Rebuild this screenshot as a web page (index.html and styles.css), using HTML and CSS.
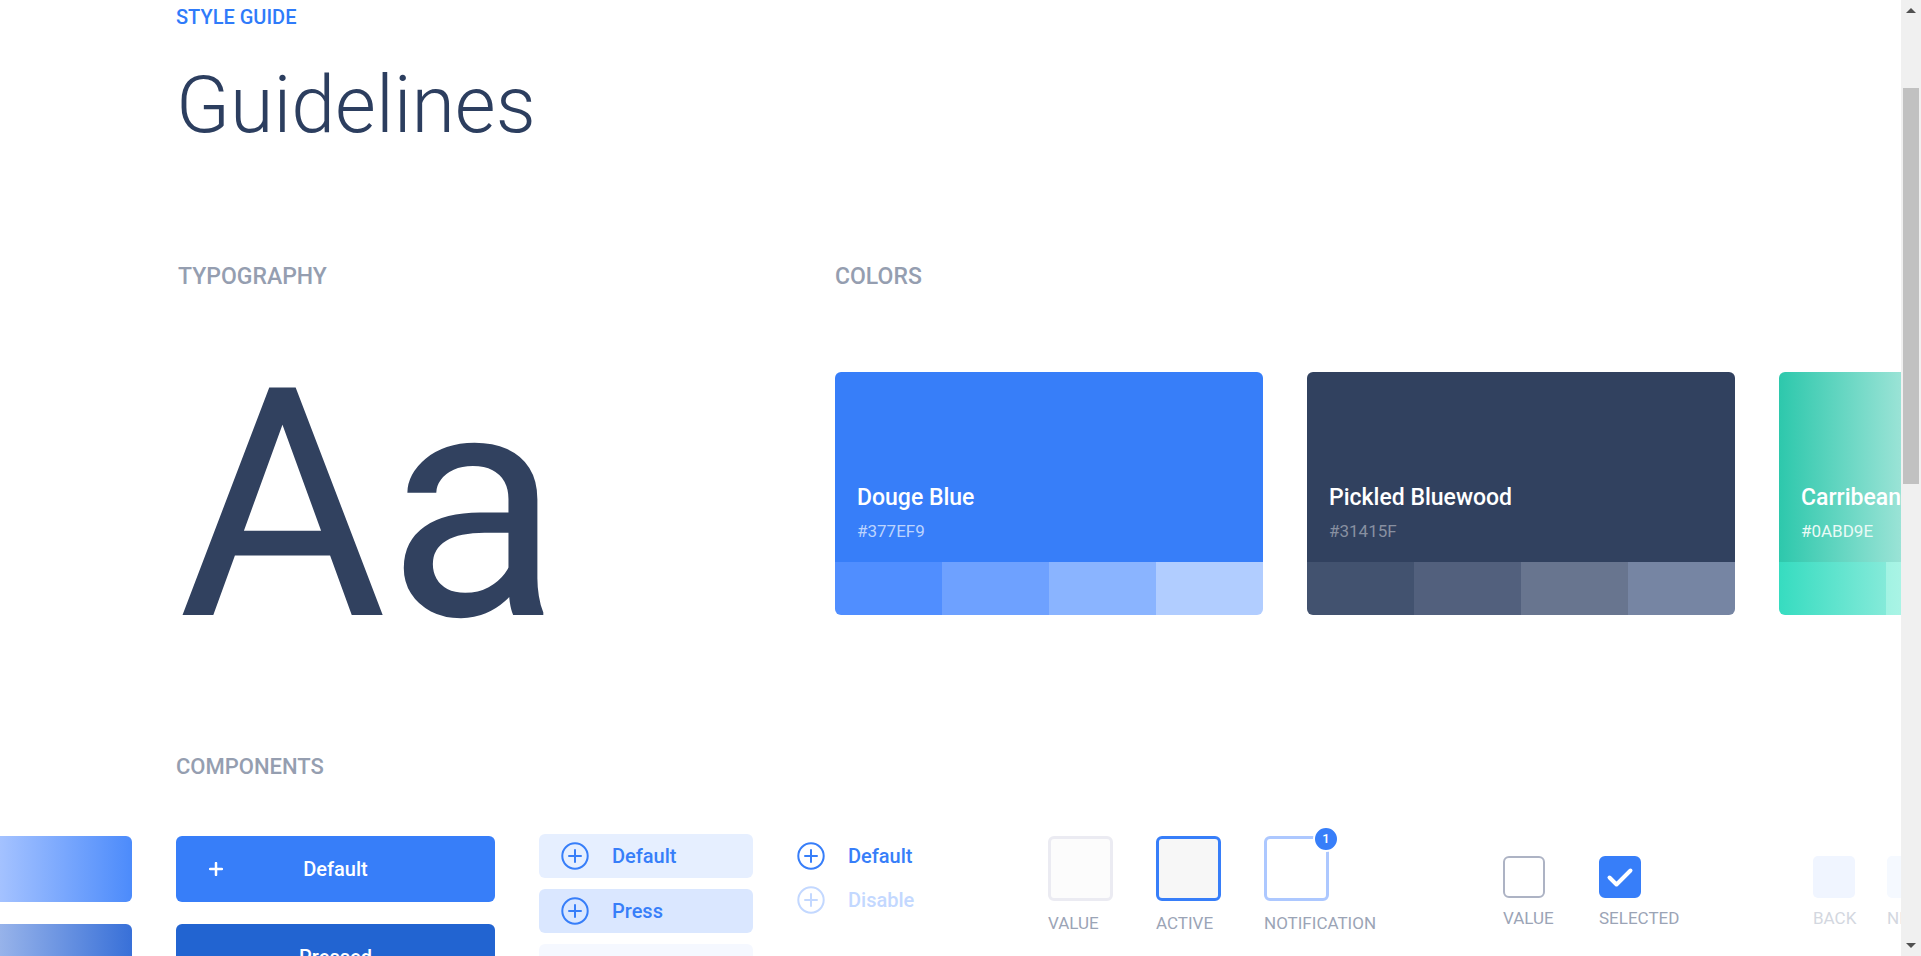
FILE: index.html
```html
<!DOCTYPE html>
<html lang="en">
<head>
<meta charset="utf-8">
<title>Style Guide – Guidelines</title>
<link rel="stylesheet" href="styles.css">
</head>
<body>
<svg class="sprite" aria-hidden="true">
  <symbol id="circle-plus" viewBox="0 0 28 28"><circle cx="14" cy="14" r="12.700"/><path d="M14 8v12M8 14h12"/></symbol>
</svg>
<main class="page">
  <header class="intro">
    <p class="eyebrow">STYLE GUIDE</p>
    <h1 class="title">Guidelines</h1>
  </header>

  <div class="foundations">
    <section class="typography">
      <h2 class="section-title">TYPOGRAPHY</h2>
      <p class="specimen">Aa</p>
    </section>
    <section class="colors">
      <h2 class="section-title">COLORS</h2>
      <div class="cards">
        <article class="card blue">
          <div class="card-main"><h3 class="card-name">Douge Blue</h3><p class="card-hex">#377EF9</p></div>
          <div class="shades"><i class="s1"></i><i class="s2"></i><i class="s3"></i><i class="s4"></i></div>
        </article>
        <article class="card navy">
          <div class="card-main"><h3 class="card-name">Pickled Bluewood</h3><p class="card-hex">#31415F</p></div>
          <div class="shades"><i class="s1"></i><i class="s2"></i><i class="s3"></i><i class="s4"></i></div>
        </article>
        <article class="card green">
          <div class="card-main"><h3 class="card-name">Carribean Green</h3><p class="card-hex">#0ABD9E</p></div>
          <div class="shades"><i class="s1"></i><i class="s2"></i><i class="s3"></i><i class="s4"></i></div>
        </article>
      </div>
    </section>
  </div>

  <section class="components">
    <h2 class="section-title">COMPONENTS</h2>
    <div class="row">
      <div class="stack main-stack">
        <button class="btn faded" type="button" aria-label="Default"></button>
        <button class="btn faded pressed" type="button" aria-label="Pressed"></button>
      </div>
      <div class="stack main-stack">
        <button class="btn" type="button">
          <svg class="plus" viewBox="0 0 14 14" aria-hidden="true"><path stroke-width="2.5" d="M7 1v12M1 7h12"/></svg>
          <span class="btn-text">Default</span>
        </button>
        <button class="btn pressed" type="button"><span class="btn-text">Pressed</span></button>
      </div>
      <div class="stack soft-stack">
        <button class="soft" type="button"><svg class="ring" aria-hidden="true"><use href="#circle-plus"/></svg>Default</button>
        <button class="soft press" type="button"><svg class="ring" aria-hidden="true"><use href="#circle-plus"/></svg>Press</button>
        <button class="soft off" type="button" aria-label="Disable" disabled></button>
      </div>
      <div class="stack link-stack">
        <button class="plain" type="button"><svg class="ring" aria-hidden="true"><use href="#circle-plus"/></svg>Default</button>
        <button class="plain off" type="button" disabled><svg class="ring" aria-hidden="true"><use href="#circle-plus"/></svg>Disable</button>
      </div>
      <div class="fields">
        <div class="field"><input class="box" id="f-value" type="text"><label for="f-value">VALUE</label></div>
        <div class="field"><input class="box active" id="f-active" type="text"><label for="f-active">ACTIVE</label></div>
        <div class="field"><input class="box notify" id="f-note" type="text"><label for="f-note">NOTIFICATION</label><span class="badge">1</span></div>
      </div>
      <div class="checks">
        <div class="check"><input class="tick" id="c-value" type="checkbox"><label for="c-value">VALUE</label></div>
        <div class="check">
          <input class="tick" id="c-selected" type="checkbox" checked>
          <svg class="mark" viewBox="0 0 42 42" aria-hidden="true"><path d="M10.500 21.500l7 7L31.500 14.500"/></svg>
          <label for="c-selected">SELECTED</label>
        </div>
      </div>
      <div class="navs">
        <div class="check"><button class="nav" id="n-back" type="button"></button><label for="n-back">BACK</label></div>
        <div class="check"><button class="nav next" id="n-next" type="button"></button><label for="n-next">NEXT</label></div>
      </div>
    </div>
  </section>
</main>
<div class="scrollbar" aria-hidden="true">
  <svg class="arrow" viewBox="0 0 10 5"><path d="M0 5L5 0l5 5z"/></svg>
  <div class="track"><div class="thumb"></div></div>
  <svg class="arrow" viewBox="0 0 10 5"><path d="M0 0l5 5 5-5z"/></svg>
</div>
</body>
</html>
```
FILE: styles.css
```css
* { box-sizing: border-box; margin: 0; padding: 0; }
html, body { height: 100%; }
body {
  display: flex;
  overflow: hidden;
  background: #fff;
  color: #31415f;
  font-family: Roboto, "Liberation Sans", sans-serif;
}
button, input { font: inherit; border: 0; appearance: none; }
.sprite { display: none; }

.page { flex: 1; min-width: 0; overflow: hidden; padding: 5px 0 0 176px; }
.eyebrow { font-size: 20px; line-height: 24px; font-weight: 500; color: #2f7bfa; }
.title { margin-top: 32px; font-size: 79px; line-height: 88px; font-weight: 300; color: #2c3e5f; }

.foundations { display: grid; grid-template-columns: 659px 1fr; margin-top: 116px; }
.section-title { font-size: 22px; line-height: 24px; font-weight: 500; color: #959eb0; }
.typography { padding-left: 2px; }
.foundations .section-title { font-size: 23px; }
.specimen { margin-top: 97px; font-size: 320px; line-height: 240px; font-weight: 400; }

.colors { min-width: 0; }
.cards { display: flex; gap: 44px; margin-top: 83px; }
.card { flex: none; width: 428px; border-radius: 6px; overflow: hidden; color: #fff; }
.card-main { height: 190px; padding: 112px 22px 0; background: #377ef9; }
.card-name { font-size: 23px; line-height: 28px; font-weight: 500; }
.card-hex { margin-top: 9px; font-size: 17px; line-height: 20px; color: #bcd4fe; }
.shades { display: grid; grid-template-columns: repeat(4, 1fr); height: 53px; }
.s1 { background: #508eff; }
.s2 { background: #6ea1ff; }
.s3 { background: #8ab4ff; }
.s4 { background: #b1cdff; }
.navy .card-main { background: #31415f; }
.navy .card-hex { color: #8890a1; }
.navy .s1 { background: #42526f; }
.navy .s2 { background: #52607d; }
.navy .s3 { background: #68758f; }
.navy .s4 { background: #7685a3; }
.green .card-main { background: linear-gradient(90deg, #2dc8ac, #9ae3d6 122px, #fff); }
.green .card-hex { color: #eafaf6; }
.green .s1 { background: linear-gradient(90deg, #36dcc0, #84ead9); }
.green .s2 { background: linear-gradient(90deg, #a2f3e3, #d5faf3); }
.green .s3, .green .s4 { background: #eefdfa; }

.components { margin-top: 129px; }
.row { display: flex; align-items: flex-start; gap: 44px; margin: 55px 0 0 -363px; }
.row > * { flex: none; }
.stack { display: flex; flex-direction: column; }
.main-stack { width: 319px; gap: 22px; padding-top: 2px; }
.btn {
  position: relative;
  display: flex;
  align-items: center;
  justify-content: center;
  height: 66px;
  border-radius: 6px;
  background: #377ef9;
  color: #fff;
  font-size: 20px;
  font-weight: 500;
}
.btn.pressed { background: #2264d1; }
.btn.faded { background: linear-gradient(90deg, #fff, #a4c2ff 187px, #4c8bfb); }
.btn.faded.pressed { background: linear-gradient(90deg, #fff, #97b3ea 187px, #3870d8); }
.plus { position: absolute; left: 33px; width: 14px; height: 14px; stroke: #fff; stroke-linecap: round; }

.soft-stack { width: 214px; gap: 11px; }
.soft, .plain {
  display: flex;
  align-items: center;
  gap: 23px;
  height: 44px;
  background: none;
  color: #377ef9;
  font-size: 20px;
  font-weight: 500;
}
.soft { padding-left: 22px; border-radius: 6px; background: #e6efff; }
.soft.press { background: #dae7ff; }
.soft.off { background: #f5f8ff; }
.ring { width: 28px; height: 28px; fill: none; stroke: currentColor; stroke-width: 2; stroke-linecap: round; }
.link-stack { width: 207px; }
.plain.off { color: #c3d8ff; }

.fields { display: flex; gap: 43px; padding-top: 2px; }
.field { position: relative; display: flex; flex-direction: column; gap: 12px; width: 65px; }
label { font-size: 17px; line-height: 20px; white-space: nowrap; color: #9ba4b6; }
.box { width: 65px; height: 65px; border: 3px solid #ebebf2; border-radius: 6px; background: #fcfcfc; }
.box.active { border-color: #377ef9; background: #f7f7f7; }
.box.notify { border-color: #adc8ff; background: #fff; }
.badge {
  position: absolute;
  top: -10px;
  right: -10px;
  width: 26px;
  height: 26px;
  border: 2px solid #fff;
  border-radius: 50%;
  background: #377ef9;
  color: #fff;
  font-size: 13px;
  line-height: 22px;
  font-weight: 500;
  text-align: center;
}

.checks, .navs { display: flex; padding-top: 22px; }
.checks { gap: 54px; margin-left: 130px; }
.navs { gap: 32px; margin-left: 128px; }
.check { position: relative; display: flex; flex-direction: column; gap: 10px; width: 42px; }
.tick { width: 42px; height: 42px; border: 2px solid #adb3c4; border-radius: 6px; background: #fff; }
.tick:checked { border-color: #377ef9; background: #377ef9; }
.mark {
  position: absolute;
  top: 0;
  left: 0;
  width: 42px;
  height: 42px;
  fill: none;
  stroke: #fff;
  stroke-width: 4;
  stroke-linecap: round;
  stroke-linejoin: round;
  pointer-events: none;
}
.nav { width: 42px; height: 42px; border-radius: 5px; background: #f0f5ff; }
.nav.next { background: #f5f9ff; }
.navs label { color: #d3d7e0; }

.scrollbar {
  flex: none;
  display: flex;
  flex-direction: column;
  align-items: center;
  gap: 4px;
  width: 20px;
  padding: 8px 0;
  background: #f0f0f0;
}
.arrow { flex: none; width: 10px; height: 5px; fill: #505050; }
.track { flex: 1; display: grid; grid-template-rows: 87fr 100fr; width: 16px; padding-top: 71px; }
.thumb { background: #c1c1c1; }
```
